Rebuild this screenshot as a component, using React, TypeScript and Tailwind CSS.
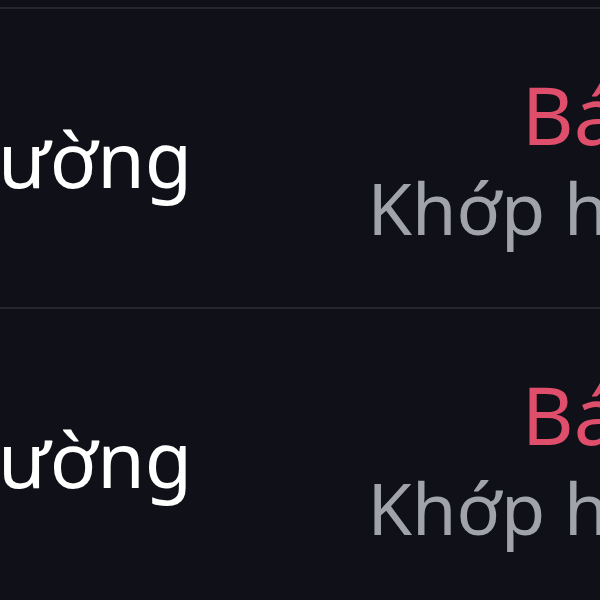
export default function App() {
  const rows = [0, 1]

  return (
    <div className="w-[600px] h-[600px] overflow-hidden bg-[#0f1018] text-white" style={{ fontFamily: '"Noto Sans", sans-serif' }}>
      <div className="h-[7px]"></div>
      {rows.map((r) => (
        <div key={r} className="h-[300px] border-t-2 border-[#262631] flex items-center justify-between">
          <div className="-ml-[192px] text-[77px] leading-none whitespace-nowrap">Thị trường</div>
          <div className="-mr-[75px] flex flex-col items-end gap-[17px]">
            <span className="pr-[7px] text-[80px] leading-none text-[#df4f6c]">Bán</span>
            <span className="text-[72px] leading-none text-[#a0a3ab] whitespace-nowrap">Khớp hết</span>
          </div>
        </div>
      ))}
    </div>
  )
}
